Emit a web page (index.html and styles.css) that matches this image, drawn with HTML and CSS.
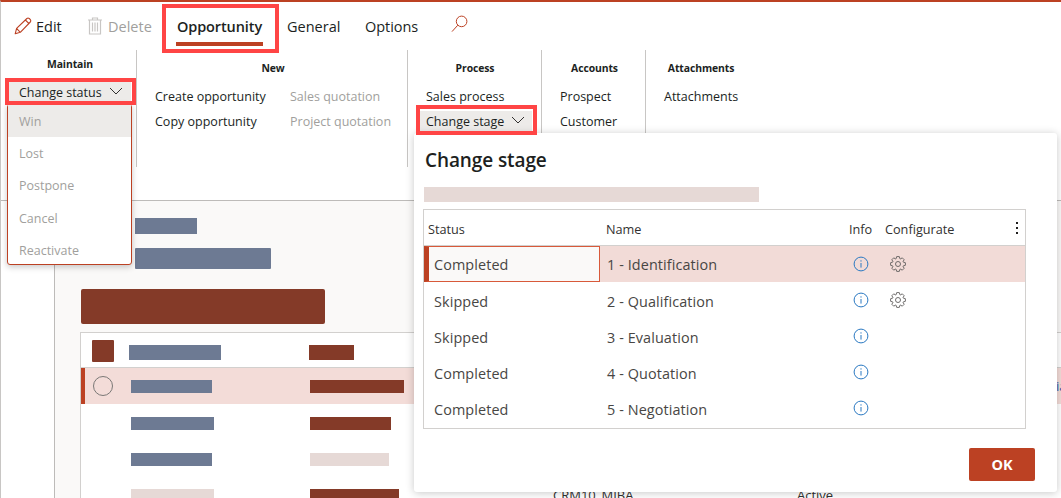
FILE: index.html
```html
<!DOCTYPE html>
<html lang="en">
<head>
<meta charset="utf-8">
<title>Opportunity</title>
<link rel="stylesheet" href="styles.css">
</head>
<body>
<svg class="defs" width="0" height="0" aria-hidden="true">
  <symbol id="i-info" viewBox="0 0 16 16">
    <circle cx="8" cy="8" r="6.9" fill="none" stroke="#2b79c2" stroke-width="1"/>
    <path d="M8 7v4.6" stroke="#2b79c2" stroke-width="1" fill="none"/>
    <circle cx="8" cy="4.9" r=".7" fill="#2b79c2"/>
  </symbol>
  <symbol id="i-gear" viewBox="0 0 16 16">
    <path d="M6.7.6H9.3L9.92 2.74 10.37 2.93 12.3 1.86 14.14 3.7 13.07 5.63 13.26 6.08 15.39 6.7V9.3L13.26 9.92 13.07 10.37 14.14 12.3 12.3 14.14 10.37 13.07 9.92 13.26 9.3 15.39H6.7L6.08 13.26 5.63 13.07 3.7 14.14 1.86 12.3 2.93 10.37 2.74 9.92 .61 9.3V6.7L2.74 6.08 2.93 5.63 1.86 3.7 3.7 1.86 5.63 2.93 6.08 2.74Z" fill="none" stroke="#605e5c" stroke-width=".9" stroke-linejoin="round"/>
    <circle cx="8" cy="8" r="2.5" fill="none" stroke="#605e5c" stroke-width=".9"/>
  </symbol>
</svg>

<div class="page">
  <nav class="tabs">
    <button class="tab tab-edit">
      <svg class="ic-edit" viewBox="0 0 18 18" width="18" height="18"><path d="M1.2 16.8 2.6 11.4 12.9 1.5Q14 .6 15.2 1.5L16.4 2.7Q17.2 3.9 16.3 5L6.3 15.3ZM2.6 11.4 6.3 15.3M11.4 3 15 6.6" fill="none" stroke="#bc4123" stroke-width="1.1" stroke-linejoin="round"/></svg>
      <span>Edit</span>
    </button>
    <button class="tab tab-delete">
      <svg class="ic-del" viewBox="0 0 16 18" width="16" height="18"><path d="M1 3H15M5.5 3V1H10.5V3M2.5 3V17H13.5V3M5.5 5.5V14.5M8 5.5V14.5M10.5 5.5V14.5" fill="none" stroke="#c8c6c4" stroke-width="1.2"/></svg>
      <span>Delete</span>
    </button>
    <button class="tab tab-active">Opportunity</button>
    <button class="tab tab-general">General</button>
    <button class="tab tab-options">Options</button>
    <button class="tab tab-search" aria-label="Search">
      <svg viewBox="0 0 17 18" width="17" height="18"><circle cx="10.6" cy="6.4" r="5.3" fill="none" stroke="#bc4123" stroke-width="1"/><path d="M6.8 10.2 1 16.6" fill="none" stroke="#bc4123" stroke-width="1"/></svg>
    </button>
  </nav>

  <section class="ribbon">
    <div class="group group-maintain">
      <h4 class="group-title title-raised">Maintain</h4>
      <button class="cmd cmd-open">Change status<svg class="chev" viewBox="0 0 14 8" width="14" height="8"><path d="M1 1 7 7 13 1" fill="none" stroke="#323130" stroke-width="1"/></svg></button>
    </div>
    <div class="group group-new">
      <h4 class="group-title">New</h4>
      <div class="cols">
        <div class="col">
          <button class="cmd">Create opportunity</button>
          <button class="cmd">Copy opportunity</button>
        </div>
        <div class="col">
          <button class="cmd cmd-off">Sales quotation</button>
          <button class="cmd cmd-off">Project quotation</button>
        </div>
      </div>
    </div>
    <div class="group group-process">
      <h4 class="group-title">Process</h4>
      <div class="col">
        <button class="cmd">Sales process</button>
        <button class="cmd cmd-open cmd-stage">Change stage<svg class="chev" viewBox="0 0 14 8" width="14" height="8"><path d="M1 1 7 7 13 1" fill="none" stroke="#323130" stroke-width="1"/></svg></button>
      </div>
    </div>
    <div class="group group-accounts">
      <h4 class="group-title">Accounts</h4>
      <div class="col">
        <button class="cmd">Prospect</button>
        <button class="cmd">Customer</button>
      </div>
    </div>
    <div class="group group-attach">
      <h4 class="group-title">Attachments</h4>
      <div class="col">
        <button class="cmd">Attachments</button>
      </div>
    </div>
  </section>

  <main class="body">
    <aside class="rail"></aside>
    <div class="content">
      <div class="bar bar-blue bar-h1"></div>
      <div class="bar bar-blue bar-h2"></div>
      <div class="bar-title"></div>
      <div class="panel">
        <div class="prow phead">
          <span class="check"></span>
          <span class="cell-a"><i class="bar bar-blue b92"></i></span>
          <span class="cell-b"><i class="bar bar-brown b45"></i></span>
        </div>
        <div class="prow psel">
          <span class="radio"></span>
          <span class="cell-a"><i class="bar bar-blue b81"></i></span>
          <span class="cell-b"><i class="bar bar-brown b94"></i></span>
          <span class="cut-link">ia</span>
        </div>
        <div class="prow pbody">
          <span class="spacer"></span>
          <span class="cell-a"><i class="bar bar-blue b83"></i></span>
          <span class="cell-b"><i class="bar bar-brown b81"></i></span>
        </div>
        <div class="prow pbody">
          <span class="spacer"></span>
          <span class="cell-a"><i class="bar bar-blue b81"></i></span>
          <span class="cell-b"><i class="bar bar-light b79"></i></span>
        </div>
        <div class="prow pbody">
          <span class="spacer"></span>
          <span class="cell-a"><i class="bar bar-light b83"></i></span>
          <span class="cell-b"><i class="bar bar-brown b89"></i></span>
          <span class="cell-c">CRM10_MIBA</span>
          <span class="cell-d">Active</span>
        </div>
      </div>
    </div>
  </main>
</div>

<ul class="menu">
  <li class="menu-hover">Win</li>
  <li>Lost</li>
  <li>Postpone</li>
  <li>Cancel</li>
  <li>Reactivate</li>
</ul>

<section class="dialog">
  <h2 class="dialog-title">Change stage</h2>
  <div class="dialog-bar"></div>
  <div class="grid">
    <div class="grow ghead">
      <span class="c-status">Status</span>
      <span class="c-name">Name</span>
      <span class="c-info">Info</span>
      <span class="c-conf">Configurate</span>
      <span class="c-more"><i></i><i></i><i></i></span>
    </div>
    <div class="grow gsel">
      <span class="c-status c-focus">Completed</span>
      <span class="c-name">1 - Identification</span>
      <span class="c-info"><svg class="ic-16"><use href="#i-info"/></svg></span>
      <span class="c-conf"><svg class="ic-16"><use href="#i-gear"/></svg></span>
    </div>
    <div class="grow gbody">
      <span class="c-status">Skipped</span>
      <span class="c-name">2 - Qualification</span>
      <span class="c-info"><svg class="ic-16"><use href="#i-info"/></svg></span>
      <span class="c-conf"><svg class="ic-16"><use href="#i-gear"/></svg></span>
    </div>
    <div class="grow gbody">
      <span class="c-status">Skipped</span>
      <span class="c-name">3 - Evaluation</span>
      <span class="c-info"><svg class="ic-16"><use href="#i-info"/></svg></span>
      <span class="c-conf"></span>
    </div>
    <div class="grow gbody">
      <span class="c-status">Completed</span>
      <span class="c-name">4 - Quotation</span>
      <span class="c-info"><svg class="ic-16"><use href="#i-info"/></svg></span>
      <span class="c-conf"></span>
    </div>
    <div class="grow gbody">
      <span class="c-status">Completed</span>
      <span class="c-name">5 - Negotiation</span>
      <span class="c-info"><svg class="ic-16"><use href="#i-info"/></svg></span>
      <span class="c-conf"></span>
    </div>
  </div>
  <div class="dialog-foot"><button class="ok">OK</button></div>
</section>

<div class="mark mark-tab"></div>
<div class="mark mark-status"></div>
<div class="mark mark-stage"></div>
</body>
</html>
```
FILE: styles.css
```css
* { box-sizing: border-box; }
html, body { margin: 0; padding: 0; height: 100%; }
body {
  position: relative;
  width: 1061px;
  height: 498px;
  overflow: hidden;
  background: #fff;
  color: #201f1e;
  font-family: "Open Sans", "Noto Sans", "Liberation Sans", sans-serif;
}
button { font: inherit; color: inherit; background: none; border: 0; padding: 0; margin: 0; }
.defs { position: absolute; }

.page {
  display: flex;
  flex-direction: column;
  height: 498px;
  border-top: 2px solid #bc4123;
  border-left: 1px solid #c8c6c4;
}

/* Top tabs */
.tabs { display: flex; align-items: center; height: 48px; flex: none; font-size: 14.5px; letter-spacing: -.1px; }
.tab { display: flex; align-items: center; height: 48px; white-space: nowrap; }
.tab-edit { margin-left: 13px; gap: 4px; width: 73px; }
.tab-delete { gap: 5px; color: #a19f9d; width: 89px; }
.ic-del { display: block; }
.tab-active { width: 87px; position: relative; font-weight: 600; justify-content: center; letter-spacing: -.1px; }
.tab-active::after { content: ""; position: absolute; left: 0; right: 0; top: 40px; height: 4px; background: #bc4123; }
.tab-general { margin-left: 24px; width: 54px; font-weight: 500; }
.tab-options { margin-left: 24px; width: 55px; font-weight: 500; letter-spacing: -.05px; }
.tab-search { margin-left: 31px; margin-top: -4px; }

/* Ribbon */
.ribbon { display: flex; height: 151px; flex: none; border-bottom: 1px solid #bdbbb9; font-size: 12.5px; }
.group { position: relative; height: 117px; padding-top: 12px; flex: none; }
.group-title { margin: 0; height: 13px; font-size: 10.4px; line-height: 13px; font-weight: 700; text-align: center; color: #201f1e; letter-spacing: -.1px; }
.title-raised { margin-top: -4px; }
.col { display: flex; flex-direction: column; gap: 5px; }
.cols { display: flex; }
.cmd { display: flex; align-items: center; height: 20px; white-space: nowrap; }
.cmd-off { color: #a19f9d; }
.cmd-open { background: #edebe9; }
.chev { margin-left: 7px; margin-top: -2px; }
.group-maintain { width: 136px; padding-left: 8px; border-right: 1px solid #c8c6c4; }
.group-maintain .group-title { width: 122px; }
.group-maintain .cmd { width: 122px; margin-top: 11px; padding-left: 10px; }
.group-new { width: 271px; padding-left: 18px; border-right: 1px solid #c8c6c4; }
.group-new .group-title { width: 236px; }
.group-new .cols { margin-top: 11px; gap: 24px; }
.group-new .col { width: 111px; }
.group-process { width: 134px; padding-left: 10px; border-right: 1px solid #c8c6c4; }
.group-process .group-title { width: 114px; }
.group-process .col { margin-top: 11px; }
.group-process .cmd { padding-left: 8px; }
.cmd-stage { width: 114px; }
.group-accounts { width: 104px; padding-left: 18px; border-right: 1px solid #c8c6c4; }
.group-accounts .group-title { width: 69px; }
.group-accounts .col { margin-top: 11px; }
.group-attach { padding-left: 18px; }
.group-attach .col { margin-top: 11px; }

/* Page behind */
.body { display: flex; flex: 1; min-height: 0; overflow: hidden; }
.rail { width: 54px; flex: none; border-right: 1px solid #bdbbb9; }
.content { flex: 1; background: #faf9f8; padding: 17px 0 0 26px; overflow: hidden; }
.bar { display: block; }
.bar-blue { background: #6d7a93; }
.bar-brown { background: #843a28; }
.bar-light { background: #e6d9d6; }
.bar-h1 { width: 62px; height: 16px; margin-left: 54px; }
.bar-h2 { width: 136px; height: 21px; margin: 14px 0 0 54px; border-radius: 1px; }
.bar-title { width: 244px; height: 35px; margin-top: 20px; background: #843a28; border-radius: 2px; }
.panel { width: 1000px; margin-top: 8px; margin-left: -1px; background: #fff; border: 1px solid #d2d0ce; border-bottom: 0; }
.prow { position: relative; display: flex; align-items: center; height: 36px; }
.prow .bar { height: 13px; }
.phead { height: 35px; border-bottom: 1px solid #d2d0ce; }
.phead .bar { height: 15px; margin-top: 4px; }
.check { width: 22px; height: 22px; margin: 2px 0 0 11px; background: #843a28; border-radius: 1px; }
.phead .cell-a { margin-left: 15px; width: 180px; }
.psel { background: #f3dcd8; border-left: 4px solid #bc4123; }
.radio { width: 20px; height: 20px; margin-left: 8px; border: 1px solid #7a7876; border-radius: 50%; }
.spacer { width: 46px; }
.psel .cell-a { width: 179px; margin-left: 18px; }
.pbody { padding-top: 2px; }
.pbody .cell-a { width: 179px; margin-left: 4px; }
.b92 { width: 92px; } .b45 { width: 45px; } .b81 { width: 81px; } .b94 { width: 94px; }
.b83 { width: 83px; } .b79 { width: 79px; } .b89 { width: 89px; }
.cell-c, .cell-d { font-size: 13px; color: #323130; white-space: nowrap; }
.cell-c { margin-left: 154px; width: 244px; }
.cut-link { position: absolute; left: 971px; font-size: 13px; color: #2b5fb0; }

/* Dropdown */
.menu {
  position: absolute; left: 7px; top: 104px; width: 125px; height: 161px;
  margin: 0; padding: 0; list-style: none; background: #fff;
  border: 1px solid #bc4123; border-radius: 3px;
  box-shadow: 0 2px 6px rgba(0,0,0,.22);
  font-size: 12.5px; color: #a19f9d;
}
.menu li { display: flex; align-items: center; height: 32.3px; padding-left: 11px; }
.menu-hover { background: #edebe9; }

/* Dialog */
.dialog {
  position: absolute; left: 414px; top: 133px; width: 643px; height: 359px;
  padding: 15px 22px 0 10px; background: #fff; border-radius: 3px;
  box-shadow: 0 1px 8px rgba(0,0,0,.22);
}
.dialog-title { margin: 0 0 0 1px; font-size: 19px; line-height: 24px; font-weight: 600; color: #201f1e; letter-spacing: -.1px; }
.dialog-bar { width: 335px; height: 15px; margin-top: 15px; background: #e6d9d6; }
.grid { width: 603px; height: 220px; margin: 7px 0 0 -1px; border: 1px solid #d2d0ce; }
.grow { display: flex; align-items: center; height: 36px; font-size: 14.4px; color: #484644; letter-spacing: .1px; }
.gbody { padding-top: 2px; }
.ghead { height: 36px; padding-top: 2px; font-size: 12.7px; color: #323130; border-bottom: 1px solid #d2d0ce; letter-spacing: 0; }
.c-status { width: 182px; padding-left: 10px; flex: none; }
.c-name { width: 242px; flex: none; padding-left: 1px; }
.c-info { width: 37px; flex: none; display: flex; }
.c-conf { flex: 1; display: flex; }
.ghead .c-status { padding-left: 4px; }
.ghead .c-name { padding-left: 0; }
.ghead .c-info { margin-left: 1px; width: 36px; }
.gsel { background: #f2dbd7; }
.c-focus {
  height: 36px; width: 176px; margin-right: 6px; padding-left: 5px;
  display: flex; align-items: center; background: #faf9f8;
  border: 1px solid #d8593a; border-left: 5px solid #bc4123;
}
.ic-16 { width: 16px; height: 16px; display: block; margin-top: -2px; }
.gsel .ic-16 { margin-top: 0; }
.c-info .ic-16 { margin-left: 5px; }
.c-conf .ic-16 { margin-left: 5px; }
.c-more { display: flex; flex-direction: column; gap: 3px; width: 9px; margin-top: -1px; }
.c-more i { display: block; width: 2px; height: 2px; background: #201f1e; }
.dialog-foot { display: flex; justify-content: flex-end; margin-top: 19px; }
.ok {
  width: 66px; height: 33px; background: #bc4123; color: #fff;
  font-size: 14.5px; font-weight: 700; border-radius: 2px;
}

/* Red annotation boxes */
.mark { position: absolute; border: 4px solid #ff4545; pointer-events: none; }
.mark-tab { left: 162px; top: 4px; width: 117px; height: 49px; }
.mark-status { left: 5px; top: 78px; width: 131px; height: 27px; }
.mark-stage { left: 416px; top: 105px; width: 121px; height: 30px; }
```
